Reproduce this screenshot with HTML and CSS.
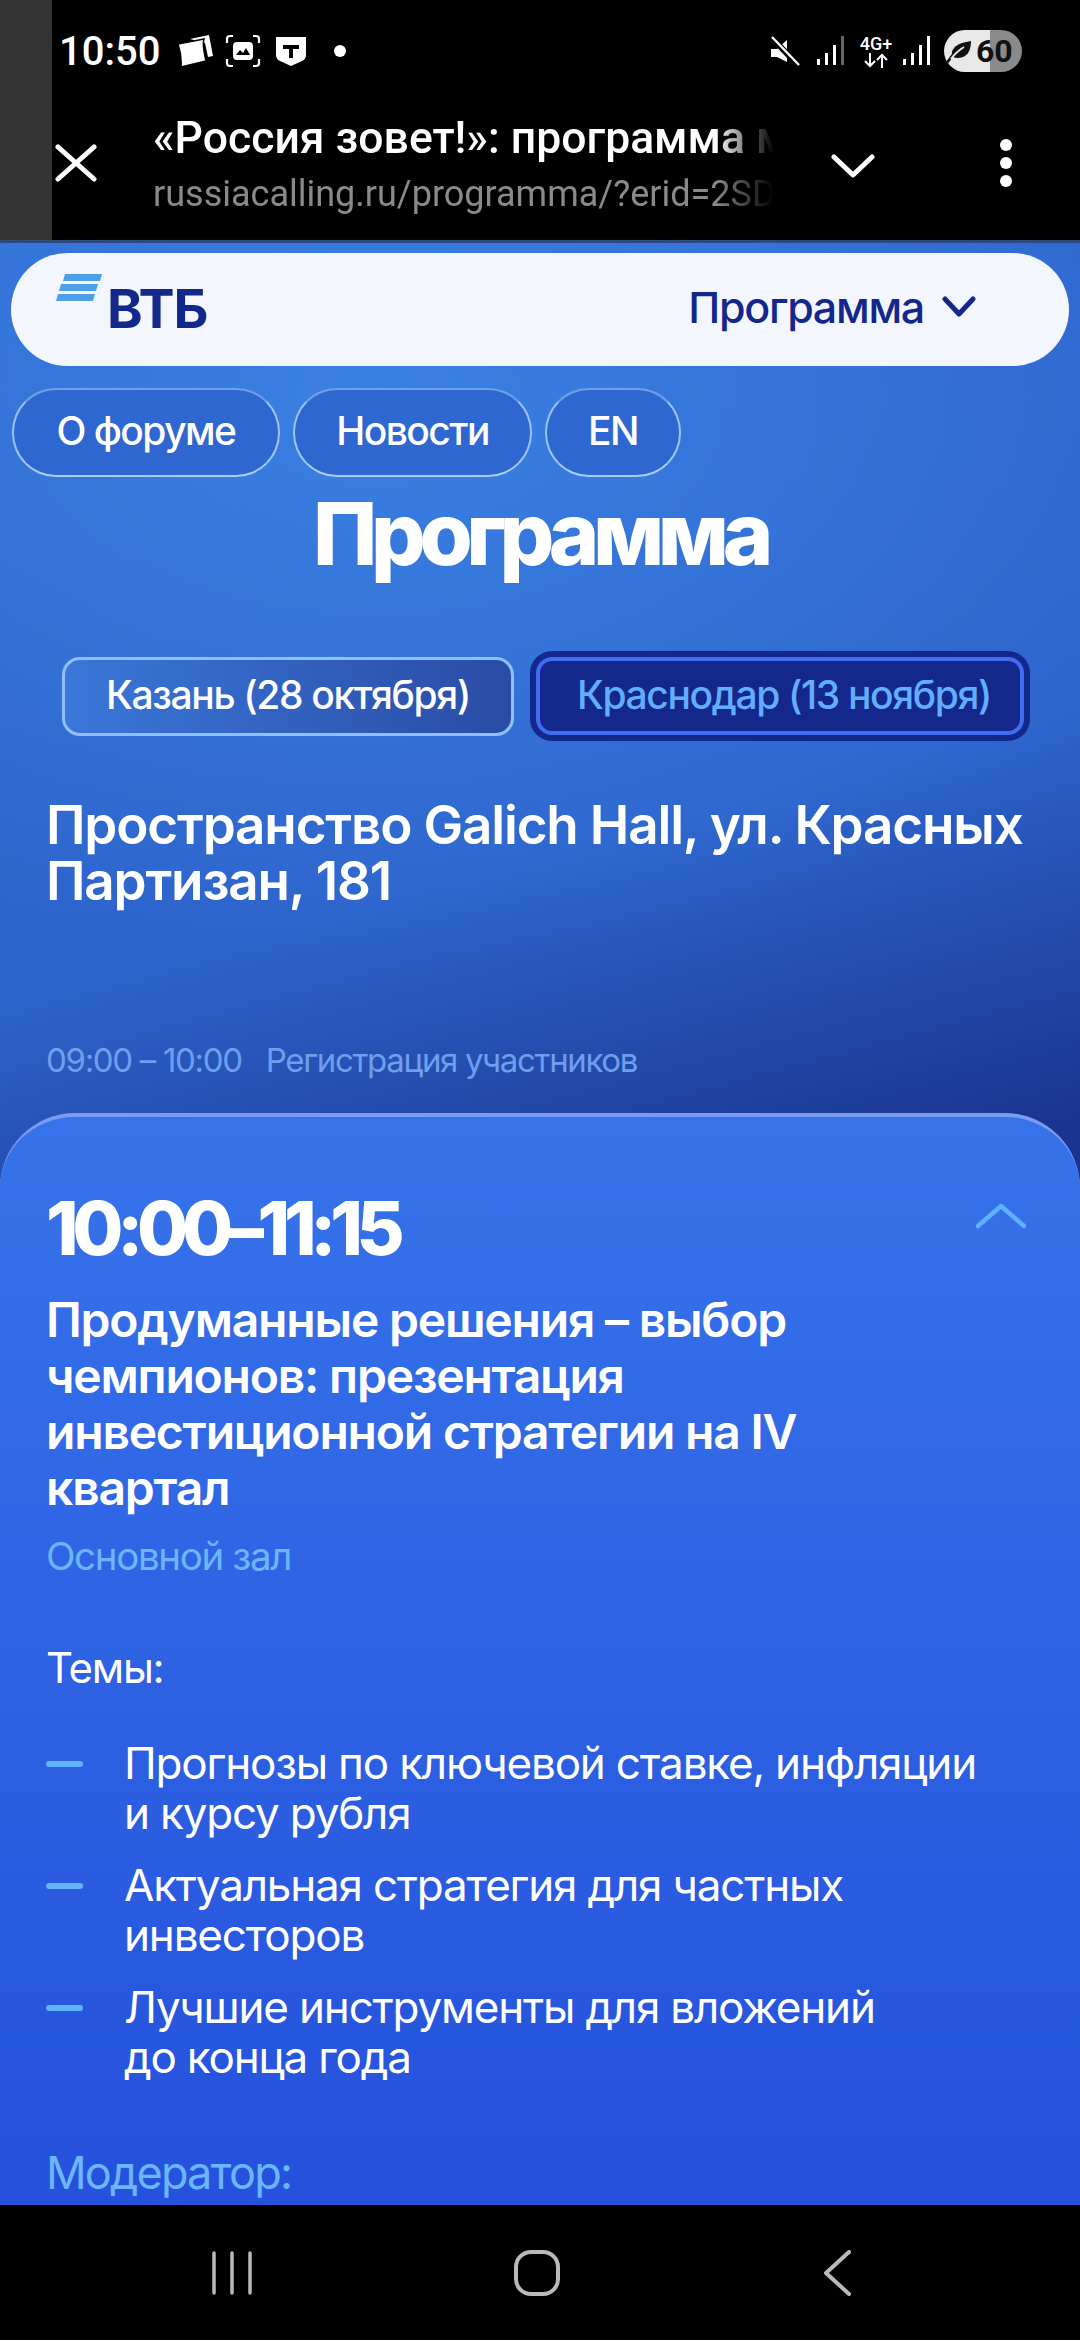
FILE: index.html
```html
<!DOCTYPE html>
<html lang="ru">
<head>
    <meta charset="UTF-8">
    <meta name="viewport" content="width=device-width, initial-scale=1.0">
    <title>Программа</title>
    <link rel="stylesheet" href="styles.css">
</head>
<body>

    <!-- верхняя панель -->
    <header class="topbar">
        <div class="status">
            <span class="clock">10:50</span>
            <svg class="st-photo" width="36" height="32" viewBox="0 0 36 32">
                <path d="M12 4 31 0l4 21-5 1-3-14z" fill="#fff"/>
                <path d="M0 9 26 4q-2 5 2 22L3 32q1-11-3-23z" fill="#fff" stroke="#000" stroke-width="1.5"/>
            </svg>
            <svg class="st-shot" width="36" height="34" viewBox="0 0 36 34" fill="none">
                <path d="M8 2H5Q2 2 2 5v4M28 2h3q3 0 3 3v4M8 32H5q-3 0-3-3v-4M28 32h3q3 0 3-3v-4" stroke="#fff" stroke-width="2.2"/>
                <rect x="8" y="8" width="20" height="18" rx="4" fill="#fff"/>
                <path d="M11 21l4-5 3 3 3-5 4 7z" fill="#000"/>
            </svg>
            <svg class="st-shield" width="30" height="29" viewBox="0 0 30 29">
                <path d="M0 0h30v18q0 4-4 6l-11 5-11-5q-4-2-4-6z" fill="#fff"/>
                <path d="M7 8h16v4h-6v9h-4v-9H7z" fill="#000"/>
            </svg>
            <span class="st-dot"></span>

            <div class="status-right">
                <svg width="30" height="30" viewBox="0 0 30 30">
                    <path d="M0 10h6l10-9v22L6 18H0z" fill="#fff" transform="translate(1 3)"/>
                    <path d="M2 2l26 27" stroke="#000" stroke-width="6"/>
                    <path d="M2 1l27 28" stroke="#fff" stroke-width="2.4"/>
                </svg>
                <svg class="st-sig1" width="28" height="30" viewBox="0 0 28 30">
                    <rect x="0" y="23" width="3" height="6" fill="#fff"/>
                    <rect x="8" y="17" width="3" height="12" fill="#fff"/>
                    <rect x="16" y="9" width="3" height="20" fill="#fff"/>
                    <rect x="24" y="0" width="3" height="29" fill="#666"/>
                </svg>
                <div class="st-net">
                    <span>4G+</span>
                    <svg width="24" height="15" viewBox="0 0 24 15" fill="none" stroke="#fff" stroke-width="2">
                        <path d="M6 0v13M1 8l5 5 5-5M18 15V2M13 7l5-5 5 5"/>
                    </svg>
                </div>
                <svg class="st-sig2" width="28" height="30" viewBox="0 0 28 30">
                    <rect x="0" y="23" width="3" height="6" fill="#fff"/>
                    <rect x="8" y="17" width="3" height="12" fill="#fff"/>
                    <rect x="16" y="9" width="3" height="20" fill="#fff"/>
                    <rect x="24" y="0" width="3" height="29" fill="#fff"/>
                </svg>
                <div class="battery">
                    <svg width="26" height="26" viewBox="0 0 26 26">
                        <path d="M5 18Q3 6 24 3q0 17-14 17-3 0-5-2z" fill="#111"/>
                        <path d="M0 25Q7 13 17 9" stroke="#111" stroke-width="2.5" fill="none"/>
                        <path d="M4 21Q9 14 17 9" stroke="#e8e8e8" stroke-width="2" fill="none"/>
                    </svg>
                    <span>60</span>
                </div>
            </div>
        </div>

        <div class="browser">
            <svg class="br-close" width="42" height="38" viewBox="0 0 42 38" fill="none" stroke="#fff" stroke-width="5" stroke-linecap="round">
                <path d="M3 3l36 32M39 3L3 35"/>
            </svg>
            <div class="br-text">
                <div class="br-title">«Россия зовет!»: программа м</div>
                <div class="br-url">russiacalling.ru/programma/?erid=2SD</div>
            </div>
            <svg class="br-down" width="44" height="24" viewBox="0 0 44 24" fill="none" stroke="#fff" stroke-width="5" stroke-linecap="round" stroke-linejoin="round">
                <path d="M3 3l19 18L41 3"/>
            </svg>
            <div class="br-more"><i></i><i></i><i></i></div>
        </div>
    </header>

    <main class="page">
        <div class="nav">
            <div class="logo">
                <svg width="46" height="27" viewBox="0 0 46 27">
                    <path d="M9 0h37l-2 7H7zM5 10h37l-2 7H3zM2 20h37l-2 7H0z" fill="#4f9fe8"/>
                </svg>
                <span>ВТБ</span>
            </div>
            <div class="nav-menu">
                <span>Программа</span>
                <svg width="34" height="22" viewBox="0 0 34 22" fill="none" stroke="#14278a" stroke-width="5" stroke-linecap="round" stroke-linejoin="round">
                    <path d="M3 3l14 15L31 3"/>
                </svg>
            </div>
        </div>

        <div class="pills">
            <a class="pill pill-forum">О форуме</a>
            <a class="pill pill-news">Новости</a>
            <a class="pill pill-en">EN</a>
        </div>

        <h1>Программа</h1>

        <div class="tabs">
            <div class="tab">Казань (28 октября)</div>
            <div class="tab-active"><div class="tab-inner">Краснодар (13 ноября)</div></div>
        </div>

        <h2 class="address">Пространство Galich Hall, ул. Красных<br>Партизан, 181</h2>

        <div class="reg"><span>09:00 – 10:00</span><span>Регистрация участников</span></div>

        <section class="card">
            <div class="card-head">
                <div class="time">10:00–11:15</div>
                <svg width="50" height="26" viewBox="0 0 50 26" fill="none" stroke="#5fb0ff" stroke-width="4.5" stroke-linecap="round" stroke-linejoin="round">
                    <path d="M2 23L25 3l23 20"/>
                </svg>
            </div>
            <h3>Продуманные решения – выбор<br>чемпионов: презентация<br>инвестиционной стратегии на IV<br>квартал</h3>
            <div class="room">Основной зал</div>
            <div class="topics">Темы:</div>
            <ul>
                <li>Прогнозы по ключевой ставке, инфляции<br>и курсу рубля</li>
                <li>Актуальная стратегия для частных<br>инвесторов</li>
                <li>Лучшие инструменты для вложений<br>до конца года</li>
            </ul>
            <div class="moderator">Модератор:</div>
        </section>
    </main>

    <!-- системная навигация -->
    <footer class="sysnav">
        <svg width="42" height="44" viewBox="0 0 42 44" fill="none" stroke="#b9b9b9" stroke-width="3.5" stroke-linecap="round">
            <path d="M3 2v40M21 2v40M39 2v40"/>
        </svg>
        <svg class="home" width="46" height="46" viewBox="0 0 46 46" fill="none" stroke="#b9b9b9" stroke-width="4">
            <rect x="2" y="2" width="42" height="42" rx="15"/>
        </svg>
        <svg width="28" height="46" viewBox="0 0 28 46" fill="none" stroke="#b9b9b9" stroke-width="4" stroke-linecap="round" stroke-linejoin="round">
            <path d="M26 2L3 23l23 21"/>
        </svg>
    </footer>

</body>
</html>
```

FILE: styles.css
```css
* { box-sizing: border-box; }

body {
    margin: 0;
    width: 1080px;
    height: 2340px;
    overflow: hidden;
    display: flex;
    flex-direction: column;
    background: #000;
    font-family: Inter, "Noto Sans", sans-serif;
    color: #fff;
}

/* верхняя панель */
.topbar {
    position: relative;
    height: 243px;
    background: #000;
    border-bottom: 3px solid #2c4a7c;
    flex: none;
}
.topbar::before {
    content: "";
    position: absolute;
    left: 0;
    top: 0;
    bottom: 0;
    width: 52px;
    background: #333;
}

.status {
    height: 102px;
    padding: 0 0 0 59px;
    display: flex;
    align-items: center;
}
.clock { font-family: Roboto, sans-serif; font-weight: 500; font-size: 40px; width: 119px; }
.st-shot { margin-left: 11px; }
.st-shield { margin-left: 15px; }
.st-dot { width: 12px; height: 12px; border-radius: 50%; background: #fff; margin-left: 28px; }

.status-right {
    margin-left: auto;
    padding-right: 58px;
    display: flex;
    align-items: center;
}
.st-sig1 { margin-left: 17px; }
.st-net { margin-left: 12px; width: 38px; text-align: center; font-family: Roboto, sans-serif; font-weight: 500; font-size: 18px; line-height: 18px; }
.st-net svg { display: block; margin: 0 auto; }
.st-sig2 { margin-left: 8px; }

.battery {
    margin-left: 13px;
    width: 78px;
    height: 42px;
    border-radius: 21px;
    background: linear-gradient(to right, #e8e8e8 59%, #8a8a8a 59%);
    display: flex;
    align-items: center;
    padding-left: 3px;
    gap: 3px;
    color: #111;
    font-family: Roboto, sans-serif;
    font-weight: 700;
    font-size: 32px;
}

.browser {
    height: 122px;
    display: flex;
    align-items: center;
    padding-left: 55px;
}
.br-text {
    width: 640px;
    margin-left: 56px;
    padding-top: 6px;
    white-space: nowrap;
    -webkit-mask-image: linear-gradient(to right, #000 88%, transparent 97%);
    mask-image: linear-gradient(to right, #000 88%, transparent 97%);
}
.br-title { font-family: Roboto, sans-serif; font-weight: 500; font-size: 44.5px; line-height: 56px; }
.br-url { font-family: Roboto, sans-serif; font-size: 36px; line-height: 56px; color: #8a8a8a; }
.br-down { margin-left: 38px; margin-top: 6px; }
.br-more { margin-left: 125px; display: flex; flex-direction: column; gap: 6px; }
.br-more i { width: 12px; height: 12px; border-radius: 50%; background: #fff; }

/* страница */
.page {
    flex: 1;
    overflow: hidden;
    display: flex;
    flex-direction: column;
    background:
        radial-gradient(ellipse 900px 560px at 35% 8%, #3a80e2 0%, rgba(58,128,226,0) 100%),
        linear-gradient(165deg, #2f68cf 0%, #2d63cb 34%, #1a348f 52%, #1a348f 100%);
}

.nav {
    margin: 10px 11px 0;
    height: 113px;
    flex: none;
    border-radius: 57px;
    background: #f3f7fd;
    display: flex;
    align-items: center;
    padding: 0 93px 6px 45px;
    color: #14278a;
}
.logo { display: flex; align-items: flex-start; }
.logo span { font-weight: 700; font-size: 54px; line-height: 60px; margin: 5px 0 0 5px; letter-spacing: -0.02em; }
.nav-menu { margin-left: auto; display: flex; align-items: center; gap: 18px; font-weight: 500; font-size: 43px; letter-spacing: -0.03em; }

.pills { margin: 22px 0 0 12px; display: flex; gap: 13px; flex: none; }
.pill {
    height: 89px;
    padding-bottom: 5px;
    border-radius: 44px;
    border: 2px solid #9cc4f5;
    border-top-color: #6fa0e4;
    border-bottom-color: #a8cdf7;
    background: #2e67cf;
    display: flex;
    align-items: center;
    justify-content: center;
    font-weight: 500;
    font-size: 39px;
    letter-spacing: -0.04em;
}
.pill-forum { width: 268px; }
.pill-news { width: 239px; }
.pill-en { width: 136px; }

h1 {
    margin: 12px 0 0;
    height: 90px;
    line-height: 90px;
    text-align: center;
    font-size: 86px;
    font-weight: 800;
    letter-spacing: -0.075em;
    flex: none;
}

.tabs { margin: 72px 0 0 62px; display: flex; align-items: center; gap: 16px; flex: none; }
.tab {
    width: 452px;
    height: 79px;
    padding-bottom: 3px;
    border-radius: 18px;
    border: 3px solid #8fc0fb;
    background: linear-gradient(to right, #3a77d8, #2a4ca6);
    display: flex;
    align-items: center;
    justify-content: center;
    font-weight: 500;
    font-size: 39px;
    letter-spacing: -0.035em;
}
.tab-active {
    width: 500px;
    height: 90px;
    border-radius: 22px;
    background: #14278a;
    padding: 6px;
}
.tab-inner {
    height: 100%;
    padding: 0 0 3px 8px;
    border-radius: 16px;
    border: 4px solid #3f6cf0;
    display: flex;
    align-items: center;
    justify-content: center;
    color: #62adff;
    font-weight: 500;
    font-size: 39px;
    letter-spacing: -0.035em;
}

.address {
    margin: 56px 0 0 46px;
    font-size: 53px;
    line-height: 56px;
    font-weight: 600;
    letter-spacing: -0.022em;
    white-space: nowrap;
    flex: none;
}

.reg {
    margin: 129px 0 0 46px;
    display: flex;
    gap: 24px;
    line-height: 44px;
    font-size: 33px;
    letter-spacing: -0.04em;
    color: #6f9fec;
    flex: none;
}

.card {
    margin-top: 31px;
    flex: 1;
    padding: 71px 54px 0 46px;
    border-radius: 75px 75px 0 0;
    border-top: 4px solid #7a9bf0;
    background: linear-gradient(to bottom, #3673ea, #2551dc);
}
.card-head { display: flex; justify-content: space-between; }
.card-head svg { margin-top: 15px; }
.time { font-size: 74px; line-height: 80px; font-weight: 800; letter-spacing: -0.085em; }
h3 {
    margin: 24px 0 0;
    font-size: 48px;
    line-height: 56px;
    font-weight: 600;
    letter-spacing: -0.025em;
    white-space: nowrap;
}
.room { margin-top: 15px; font-size: 38.5px; line-height: 50px; color: #6cb6ff; letter-spacing: -0.035em; }
.topics { margin-top: 62px; font-size: 42px; line-height: 50px; letter-spacing: -0.03em; }

ul { margin: 45px 0 0; padding: 0; list-style: none; display: flex; flex-direction: column; gap: 22px; }
li {
    padding-left: 78px;
    font-size: 44px;
    line-height: 50px;
    letter-spacing: -0.027em;
    white-space: nowrap;
    position: relative;
}
li::before {
    content: "";
    position: absolute;
    left: 0;
    top: 23px;
    width: 37px;
    height: 6px;
    border-radius: 3px;
    background: #62b4ff;
}
.moderator { margin-top: 66px; font-size: 45px; line-height: 50px; color: #6cb6ff; letter-spacing: -0.04em; }

/* системная навигация */
.sysnav {
    height: 135px;
    flex: none;
    background: #000;
    display: flex;
    align-items: center;
    padding: 0 229px 0 211px;
    justify-content: space-between;
}
.home { margin-left: -3px; }
```
